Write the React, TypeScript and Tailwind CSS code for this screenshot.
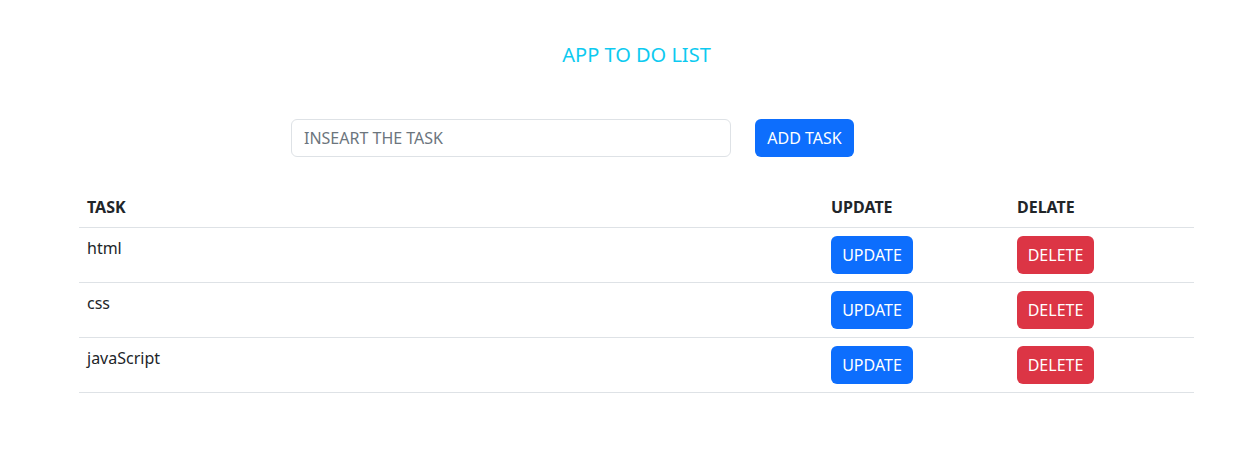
const tasks = ["html", "css", "javaScript"];

export default function App() {
  return (
    <div
      className="min-h-[459px] bg-white text-[#212529] text-base"
      style={{ fontFamily: '"Segoe UI", "Noto Sans", sans-serif' }}
    >
      <div className="ml-[79px] w-[1115px]">
        <h1 className="pt-[41px] text-center text-[20px] leading-[28px] text-[#0dcaf0]">
          APP TO DO LIST
        </h1>

        <div className="mt-[50px] flex items-center pl-[212px]">
          <input
            className="h-[38px] w-[440px] rounded-md border border-[#dee2e6] px-3 text-base outline-none placeholder:text-[#6c757d]"
            placeholder="INSEART THE TASK"
          />
          <button className="ml-[24px] h-[38px] w-[99px] rounded-md bg-[#0d6efd] text-white">
            ADD TASK
          </button>
        </div>

        <table className="mt-[30px] w-full border-collapse">
          <thead>
            <tr className="border-b border-[#dee2e6]">
              <th className="h-[40px] w-[744px] px-2 text-left font-bold">TASK</th>
              <th className="w-[186px] px-2 text-left font-bold">UPDATE</th>
              <th className="px-2 text-left font-bold">DELATE</th>
            </tr>
          </thead>
          <tbody>
            {tasks.map((t) => (
              <tr key={t} className="border-b border-[#dee2e6]">
                <td className="p-2 align-top leading-6">{t}</td>
                <td className="p-2">
                  <button className="h-[38px] w-[82px] rounded-md bg-[#0d6efd] text-white">
                    UPDATE
                  </button>
                </td>
                <td className="p-2">
                  <button className="h-[38px] w-[77px] rounded-md bg-[#dc3545] text-white">
                    DELETE
                  </button>
                </td>
              </tr>
            ))}
          </tbody>
        </table>
      </div>
    </div>
  );
}
